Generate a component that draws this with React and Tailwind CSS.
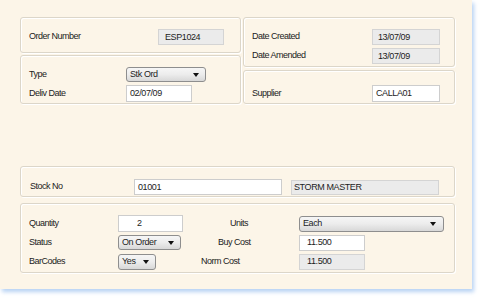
import React from 'react'

const FONT = { fontFamily: '"Liberation Sans", Arial, sans-serif' }

function Panel({ className = '', children }) {
  return (
    <div
      className={`rounded-[3px] border border-[#dcd6c9] shadow-[inset_1px_1px_0_#ffffff,1px_1px_0_#ffffff] ${className}`}
    >
      {children}
    </div>
  )
}

function Label({ className = '', children }) {
  return <div className={`shrink-0 text-[9px] tracking-[-0.5px] text-[#222] ${className}`}>{children}</div>
}

function Field({ value, grey, className = '' }) {
  return (
    <div
      className={`flex items-center shrink-0 border text-[9px] tracking-[-0.4px] text-[#1c1c1c] leading-none ${
        grey ? 'bg-[#ebebeb] border-[#d4d4d4]' : 'bg-white border-[#cdcdcd]'
      } ${className}`}
    >
      {value}
    </div>
  )
}

function Select({ value, className = '' }) {
  return (
    <div
      className={`flex items-center justify-between shrink-0 rounded-[3px] border border-[#8e8e8e] bg-gradient-to-b from-[#f6f6f6] via-[#ececec] to-[#d8d8d8] pl-[3px] pr-[6px] text-[9px] tracking-[-0.4px] text-[#1c1c1c] leading-none ${className}`}
    >
      <span>{value}</span>
      <span className="w-0 h-0 border-l-[3px] border-r-[3px] border-t-[4px] border-l-transparent border-r-transparent border-t-[#111]" />
    </div>
  )
}

export default function App() {
  return (
    <div className="w-[481px] h-[299px] bg-white overflow-hidden" style={FONT}>
      <div className="w-[472px] h-[289px] bg-[#fcf5e8] shadow-[2px_3px_4px_rgba(160,196,240,0.75)] pt-[17px] pl-[20px]">
        {/* top row */}
        <div className="flex gap-[2px]">
          <div className="flex flex-col gap-[2px] w-[221px]">
            <Panel className="h-[36px] pt-[11px] pl-[8px]">
              <div className="flex items-center">
                <Label className="w-[129px]">Order Number</Label>
                <Field grey value="ESP1024" className="w-[66px] h-[16px] pl-[6px]" />
              </div>
            </Panel>
            <Panel className="h-[49px] pt-[11px] pl-[8px] flex flex-col gap-[3px]">
              <div className="flex items-center">
                <Label className="w-[97px]">Type</Label>
                <Select value="Stk Ord" className="w-[80px] h-[15px]" />
              </div>
              <div className="flex items-center">
                <Label className="w-[97px]">Deliv Date</Label>
                <Field value="02/07/09" className="w-[66px] h-[17px] pl-[3px]" />
              </div>
            </Panel>
          </div>
          <div className="flex flex-col gap-[3px] w-[212px]">
            <Panel className="h-[50px] pt-[11px] pl-[8px] flex flex-col gap-[3px]">
              <div className="flex items-center">
                <Label className="w-[120px]">Date Created</Label>
                <Field grey value="13/07/09" className="w-[68px] h-[16px] pl-[5px]" />
              </div>
              <div className="flex items-center">
                <Label className="w-[120px]">Date Amended</Label>
                <Field grey value="13/07/09" className="w-[68px] h-[16px] pl-[5px]" />
              </div>
            </Panel>
            <Panel className="h-[34px] pt-[14px] pl-[8px]">
              <div className="flex items-center">
                <Label className="w-[120px]">Supplier</Label>
                <Field value="CALLA01" className="w-[68px] h-[17px] pl-[3px]" />
              </div>
            </Panel>
          </div>
        </div>

        {/* stock */}
        <Panel className="mt-[62px] w-[435px] h-[31px] pt-[12px] pl-[9px]">
          <div className="flex items-center">
            <Label className="w-[104px]">Stock No</Label>
            <Field value="01001" className="w-[148px] h-[16px] pl-[3px]" />
            <Field grey value="STORM MASTER" className="ml-[9px] w-[148px] h-[15px] pl-[2px]" />
          </div>
        </Panel>

        {/* details */}
        <Panel className="mt-[6px] w-[435px] h-[70px] pt-[11px] pl-[8px] flex flex-col gap-[2px]">
          <div className="flex items-center h-[17px]">
            <Label className="w-[89px]">Quantity</Label>
            <div className="w-[82px]">
              <Field value="2" className="w-[65px] h-[17px] pl-[18px]" />
            </div>
            <Label className="w-[99px] pl-[30px]">Units</Label>
            <Select value="Each" className="w-[145px] h-[16px] pl-[2px] pr-[7px]" />
          </div>
          <div className="flex items-center h-[17px]">
            <Label className="w-[89px]">Status</Label>
            <div className="w-[82px]">
              <Select value="On Order" className="w-[63px] h-[15px] pl-[2px]" />
            </div>
            <Label className="w-[99px] pl-[18px]">Buy Cost</Label>
            <Field value="11.500" className="w-[66px] h-[16px] pl-[7px]" />
          </div>
          <div className="flex items-center h-[17px]">
            <Label className="w-[89px]">BarCodes</Label>
            <div className="w-[82px]">
              <Select value="Yes" className="w-[38px] h-[16px] pl-[3px] pr-[5px]" />
            </div>
            <Label className="w-[99px] pl-[1px]">Norm Cost</Label>
            <Field grey value="11.500" className="w-[66px] h-[16px] pl-[7px]" />
          </div>
        </Panel>
      </div>
    </div>
  )
}
